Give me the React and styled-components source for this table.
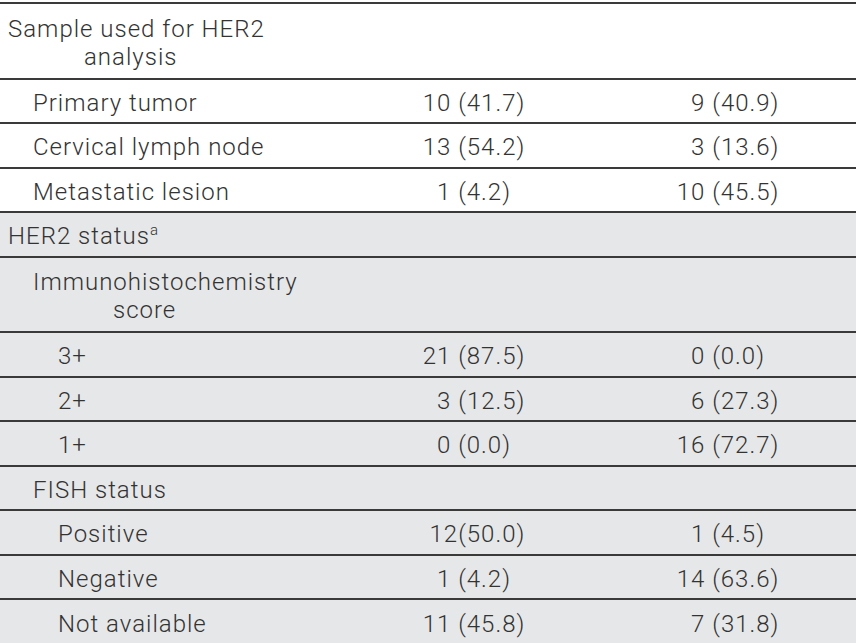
import React from "react";
import styled, { createGlobalStyle } from "styled-components";

const Global = createGlobalStyle`
  html, body { margin: 0; padding: 0; background: #ffffff; }
  body { font-family: Roboto, "Open Sans", Arial, sans-serif; }
`;

const Table = styled.div`
  margin-top: 2px;
  border-top: 2px solid #3a3a3a;
  width: 856px;
  color: #333333;
  font-family: Roboto, "Liberation Sans", Arial, sans-serif;
  font-weight: 300;
  font-size: 24px;
  line-height: 28px;
  letter-spacing: 1px;
`;

const Section = styled.div`
  background: ${(p) => (p.$shaded ? "#e6e7e8" : "#ffffff")};
`;

const Row = styled.div`
  display: grid;
  grid-template-columns: 348px 252px 1fr;
  align-items: center;
  box-sizing: border-box;
  height: ${(p) => (p.$double ? "75.5px" : "44.5px")};
  padding-top: 4px;
  border-bottom: 2px solid #3a3a3a;
  &:last-child {
    border-bottom: ${(p) => (p.$end ? "none" : "2px solid #3a3a3a")};
  }
`;

const Label = styled.div`
  padding-left: ${(p) => p.$indent + (p.$hang || 0)}px;
  text-indent: ${(p) => -(p.$hang || 0)}px;
  padding-right: 30px;
`;

const Value = styled.div`
  text-align: center;
  white-space: pre;
`;

const Sup = styled.sup`
  font-size: 15px;
  line-height: 0;
  vertical-align: 9px;
  letter-spacing: 0;
`;

const FS = "\u2007";

const top = [
  { label: "Primary tumor", a: "10 (41.7)", b: FS + "9 (40.9)" },
  { label: "Cervical lymph node", a: "13 (54.2)", b: FS + "3 (13.6)" },
  { label: "Metastatic lesion", a: "1 (4.2)", b: "10 (45.5)" },
];

const ihc = [
  { label: "3+", a: "21 (87.5)", b: "0 (0.0)" },
  { label: "2+", a: FS + "3 (12.5)", b: FS + "6 (27.3)" },
  { label: "1+", a: "0 (0.0)", b: "16 (72.7)" },
];

const fish = [
  { label: "Positive", a: " 12(50.0)", b: "1 (4.5)" },
  { label: "Negative", a: "1 (4.2)", b: "14 (63.6)" },
  { label: "Not available", a: "11 (45.8)", b: FS + "7 (31.8)" },
];

function DataRow({ r, indent, end }) {
  return (
    <Row $end={end}>
      <Label $indent={indent}>{r.label}</Label>
      <Value>{r.a}</Value>
      <Value>{r.b}</Value>
    </Row>
  );
}

export default function App() {
  return (
    <>
      <Global />
      <Table>
        <Section>
          <Row $double>
            <Label $indent={8} $hang={76}>Sample used for HER2 analysis</Label>
            <Value />
            <Value />
          </Row>
          {top.map((r) => (
            <DataRow key={r.label} r={r} indent={33} />
          ))}
        </Section>
        <Section $shaded>
          <Row>
            <Label $indent={8}>
              HER2 status<Sup>a</Sup>
            </Label>
            <Value />
            <Value />
          </Row>
          <Row $double>
            <Label $indent={33} $hang={80}>Immunohistochemistry score</Label>
            <Value />
            <Value />
          </Row>
          {ihc.map((r) => (
            <DataRow key={r.label} r={r} indent={58} />
          ))}
          <Row>
            <Label $indent={33}>FISH status</Label>
            <Value />
            <Value />
          </Row>
          {fish.map((r, i) => (
            <DataRow key={r.label} r={r} indent={58} end={i === fish.length - 1} />
          ))}
        </Section>
      </Table>
    </>
  );
}
